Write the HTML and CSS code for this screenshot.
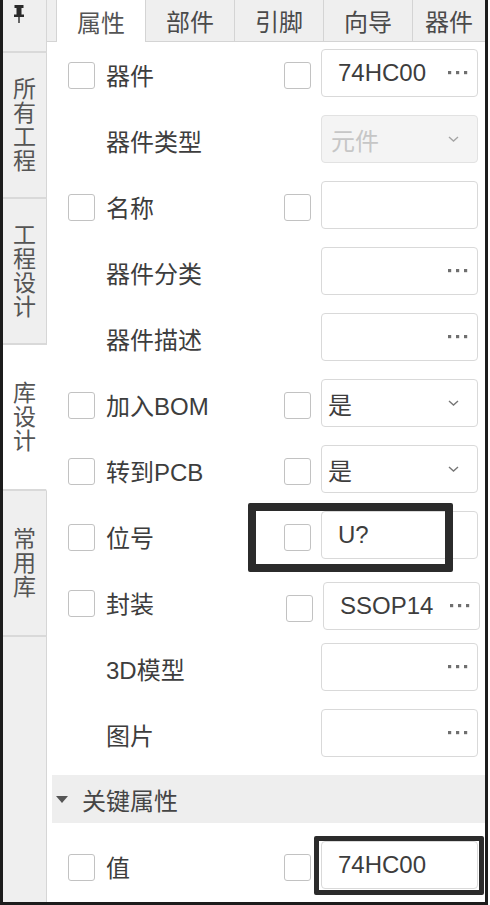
FILE: index.html
```html
<!DOCTYPE html>
<html lang="zh-CN">
<head>
<meta charset="utf-8">
<title>属性面板</title>
<link rel="stylesheet" href="styles.css">
</head>
<body>
<div class="frame">
  <aside class="sidebar">
    <div class="side-tab side-tab--pin">
      <svg class="pin" width="10" height="18" viewBox="0 0 10 18"><rect x="0.5" y="0" width="9" height="3" fill="#2b2b2b"/><rect x="2.5" y="3" width="5" height="7" fill="#2b2b2b"/><rect x="0" y="9.5" width="10" height="2.5" fill="#2b2b2b"/><rect x="4.3" y="12" width="1.4" height="6" fill="#2b2b2b"/></svg>
    </div>
    <div class="side-tab side-tab--tall"><span class="vtext">所有工程</span></div>
    <div class="side-tab side-tab--tall"><span class="vtext">工程设计</span></div>
    <div class="side-tab side-tab--tall side-tab--active"><span class="vtext">库设计</span></div>
    <div class="side-tab side-tab--tall"><span class="vtext">常用库</span></div>
    <div class="side-fill"></div>
  </aside>
  <main class="main">
    <nav class="tabs">
      <div class="tab-spacer"></div>
      <div class="tab tab--active">属性</div>
      <div class="tab">部件</div>
      <div class="tab">引脚</div>
      <div class="tab">向导</div>
      <div class="tab tab--last">器件</div>
    </nav>
    <section class="rows">
      <div class="row">
        <span class="cb"></span><span class="label">器件</span>
        <div class="ctrl"><span class="cb"></span><div class="field field--text"><span class="val">74HC00</span><svg class="dots" width="20" height="4" viewBox="0 0 20 4"><rect x="0" y="0" width="3.2" height="3.2" fill="#6f6f6f"/><rect x="8" y="0" width="3.2" height="3.2" fill="#6f6f6f"/><rect x="16" y="0" width="3.2" height="3.2" fill="#6f6f6f"/></svg></div></div>
      </div>
      <div class="row row--nocheck">
        <span class="label">器件类型</span>
        <div class="ctrl"><div class="field field--select field--disabled"><span class="val">元件</span><svg class="chev" width="11" height="6" viewBox="0 0 11 6"><path d="M1 1 L5.5 5 L10 1" fill="none" stroke="#a5a5a5" stroke-width="1.4"/></svg></div></div>
      </div>
      <div class="row">
        <span class="cb"></span><span class="label">名称</span>
        <div class="ctrl"><span class="cb"></span><div class="field field--text"></div></div>
      </div>
      <div class="row row--nocheck">
        <span class="label">器件分类</span>
        <div class="ctrl"><div class="field field--text"><span class="val"></span><svg class="dots" width="20" height="4" viewBox="0 0 20 4"><rect x="0" y="0" width="3.2" height="3.2" fill="#6f6f6f"/><rect x="8" y="0" width="3.2" height="3.2" fill="#6f6f6f"/><rect x="16" y="0" width="3.2" height="3.2" fill="#6f6f6f"/></svg></div></div>
      </div>
      <div class="row row--nocheck">
        <span class="label">器件描述</span>
        <div class="ctrl"><div class="field field--text"><span class="val"></span><svg class="dots" width="20" height="4" viewBox="0 0 20 4"><rect x="0" y="0" width="3.2" height="3.2" fill="#6f6f6f"/><rect x="8" y="0" width="3.2" height="3.2" fill="#6f6f6f"/><rect x="16" y="0" width="3.2" height="3.2" fill="#6f6f6f"/></svg></div></div>
      </div>
      <div class="row">
        <span class="cb"></span><span class="label">加入BOM</span>
        <div class="ctrl"><span class="cb"></span><div class="field field--select"><span class="val">是</span><svg class="chev" width="11" height="6" viewBox="0 0 11 6"><path d="M1 1 L5.5 5 L10 1" fill="none" stroke="#777" stroke-width="1.4"/></svg></div></div>
      </div>
      <div class="row">
        <span class="cb"></span><span class="label">转到PCB</span>
        <div class="ctrl"><span class="cb"></span><div class="field field--select"><span class="val">是</span><svg class="chev" width="11" height="6" viewBox="0 0 11 6"><path d="M1 1 L5.5 5 L10 1" fill="none" stroke="#777" stroke-width="1.4"/></svg></div></div>
      </div>
      <div class="row row--marked">
        <span class="cb"></span><span class="label">位号</span>
        <div class="ctrl"><span class="cb"></span><div class="field field--text"><span class="val">U?</span></div></div>
        <div class="mark mark--refdes"></div>
      </div>
      <div class="row">
        <span class="cb"></span><span class="label">封装</span>
        <div class="ctrl ctrl--shifted"><span class="cb"></span><div class="field field--text"><span class="val">SSOP14</span><svg class="dots" width="20" height="4" viewBox="0 0 20 4"><rect x="0" y="0" width="3.2" height="3.2" fill="#6f6f6f"/><rect x="8" y="0" width="3.2" height="3.2" fill="#6f6f6f"/><rect x="16" y="0" width="3.2" height="3.2" fill="#6f6f6f"/></svg></div></div>
      </div>
      <div class="row row--nocheck">
        <span class="label">3D模型</span>
        <div class="ctrl"><div class="field field--text"><span class="val"></span><svg class="dots" width="20" height="4" viewBox="0 0 20 4"><rect x="0" y="0" width="3.2" height="3.2" fill="#6f6f6f"/><rect x="8" y="0" width="3.2" height="3.2" fill="#6f6f6f"/><rect x="16" y="0" width="3.2" height="3.2" fill="#6f6f6f"/></svg></div></div>
      </div>
      <div class="row row--nocheck">
        <span class="label">图片</span>
        <div class="ctrl"><div class="field field--text"><span class="val"></span><svg class="dots" width="20" height="4" viewBox="0 0 20 4"><rect x="0" y="0" width="3.2" height="3.2" fill="#6f6f6f"/><rect x="8" y="0" width="3.2" height="3.2" fill="#6f6f6f"/><rect x="16" y="0" width="3.2" height="3.2" fill="#6f6f6f"/></svg></div></div>
      </div>
      <div class="group-head">
        <svg class="caret" width="12" height="7" viewBox="0 0 12 7"><path d="M0 0 L12 0 L6 7 Z" fill="#555"/></svg>
        <span class="group-title">关键属性</span>
      </div>
      <div class="row row--marked">
        <span class="cb"></span><span class="label">值</span>
        <div class="ctrl"><span class="cb"></span><div class="field field--text"><span class="val">74HC00</span></div></div>
        <div class="mark mark--value"></div>
      </div>
    </section>
  </main>
</div>
</body>
</html>
```

FILE: styles.css
```css
* { box-sizing: border-box; }

html, body {
  margin: 0;
  padding: 0;
  background: #ffffff;
}

body {
  font-family: "Liberation Sans", "Noto Sans CJK SC", sans-serif;
  color: #3a3a3a;
}

.frame {
  width: 488px;
  height: 905px;
  display: flex;
  border-left: 3px solid #1c1c1c;
  border-right: 3px solid #1c1c1c;
  border-bottom: 3px solid #1c1c1c;
  overflow: hidden;
  background: #ffffff;
}

/* ---------- left vertical tabs ---------- */
.sidebar {
  width: 44px;
  flex: none;
  display: flex;
  flex-direction: column;
}

.side-tab {
  background: #efefef;
  border-right: 1px solid #d6d6d6;
  border-bottom: 2px solid #d9d9d9;
  display: flex;
  justify-content: center;
  align-items: center;
}

.side-tab--pin {
  height: 53px;
  align-items: flex-start;
  padding-top: 5px;
  padding-right: 12px;
}

.side-tab--tall {
  height: 146px;
}

.side-tab--active {
  background: #ffffff;
  border-right-color: #ffffff;
  border-bottom-color: #d9d9d9;
}

.vtext {
  width: 24px;
  font-size: 23px;
  line-height: 24px;
  text-align: center;
  color: #555555;
  word-break: break-all;
}

.side-fill {
  flex: 1;
  background: #efefef;
  border-right: 1px solid #d6d6d6;
}

/* ---------- top tabs ---------- */
.main {
  flex: 1;
  display: flex;
  flex-direction: column;
  min-width: 0;
}

.tabs {
  height: 42px;
  flex: none;
  display: flex;
  background: #efefef;
  border-bottom: 1px solid #d4d4d4;
}

.tab-spacer {
  width: 10px;
  flex: none;
  border-right: 1px solid #d4d4d4;
}

.tab {
  width: 89px;
  flex: none;
  display: flex;
  align-items: center;
  justify-content: center;
  font-size: 24px;
  color: #4a4a4a;
  border-right: 1px solid #d4d4d4;
}

.tab--active {
  background: #ffffff;
  margin-bottom: -1px;
  color: #555555;
}

.tab--last {
  flex: 1;
  border-right: none;
}

/* ---------- property rows ---------- */
.rows {
  display: flex;
  flex-direction: column;
  gap: 18px;
  padding: 7px 0 0 5px;
}

.row {
  position: relative;
  height: 48px;
  display: flex;
  align-items: center;
  padding: 0 7px 0 16px;
}

.cb {
  width: 27px;
  height: 27px;
  flex: none;
  border: 1.5px solid #c2c2c2;
  border-radius: 3px;
  background: #ffffff;
  margin-top: 4px;
}

.label {
  flex: 1;
  margin-left: 11px;
  font-size: 24px;
  color: #3d3d3d;
  margin-top: 3px;
  white-space: nowrap;
}

.row--nocheck .label {
  margin-left: 38px;
}

.ctrl {
  display: flex;
  align-items: center;
  gap: 10px;
  flex: none;
}

.ctrl--shifted {
  margin-top: 10px;
  margin-right: -2px;
}

.field {
  width: 157px;
  height: 48px;
  border: 1px solid #d9d9d9;
  border-radius: 4px;
  background: #ffffff;
  display: flex;
  align-items: center;
  justify-content: space-between;
  padding: 0 9px 0 16px;
  font-size: 24px;
  color: #3d3d3d;
}

.field--select {
  padding-left: 6px;
  padding-right: 18px;
}

.field--disabled {
  background: #f4f4f4;
  border-color: #e2e2e2;
  color: #c6c6c6;
  padding-left: 9px;
}

.val {
  white-space: nowrap;
}

.dots {
  flex: none;
}

.chev {
  flex: none;
}

/* ---------- group header ---------- */
.group-head {
  height: 48px;
  background: #eeeeee;
  display: flex;
  align-items: center;
  padding-left: 4px;
  gap: 14px;
}

.caret {
  flex: none;
}

.group-title {
  font-size: 24px;
  color: #454545;
}

/* ---------- annotation marks ---------- */
.mark {
  position: absolute;
  border-style: solid;
  border-color: #2b2b2b;
  border-radius: 2px;
  pointer-events: none;
}

.mark--refdes {
  left: 196px;
  top: -8px;
  width: 205px;
  height: 69px;
  border-width: 8px;
}

.mark--value {
  left: 262px;
  top: -5px;
  width: 170px;
  height: 59px;
  border-width: 5px;
}
```
